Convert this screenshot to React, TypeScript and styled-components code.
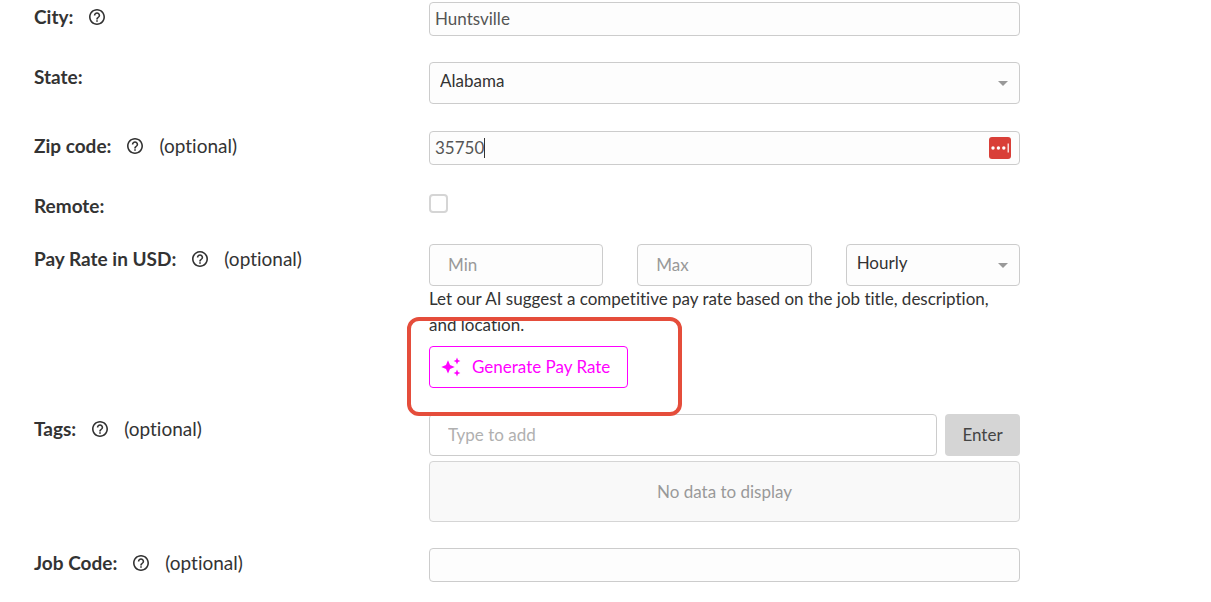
import React from "react";
import styled, { createGlobalStyle } from "styled-components";

const GlobalStyle = createGlobalStyle`
  *, *::before, *::after { box-sizing: border-box; }
  body {
    margin: 0;
    background: #fff;
    color: #333;
    font-family: Lato, "Liberation Sans", sans-serif;
    font-size: 17px;
    line-height: 26px;
    font-variant-ligatures: none;
  }
  button, input, select { font: inherit; color: inherit; margin: 0; }
`;

const Form = styled.form`
  display: flex;
  flex-direction: column;
  gap: 26px;
  max-width: 1020px;
  padding: 2px 0 20px 34px;
`;

const Row = styled.div<{ $height?: number }>`
  display: grid;
  grid-template-columns: 2fr 3fr;
  column-gap: 1px;
  align-items: start;
  height: ${(p) => (p.$height ? `${p.$height}px` : "auto")};
`;

const LabelCell = styled.div`
  display: flex;
  align-items: center;
  gap: 16px;
  font-size: 19px;
  line-height: 30px;
`;

const Label = styled.label`
  font-weight: 700;
`;

const HelpButton = styled.button`
  display: flex;
  padding: 0;
  border: 0;
  background: none;
`;

const Control = styled.div`
  position: relative;
  min-width: 0;
`;

const TextInput = styled.input<{ $tall?: boolean; $plain?: boolean }>`
  display: block;
  width: 100%;
  min-width: 0;
  height: ${(p) => (p.$tall ? 42 : 34)}px;
  padding: 0 ${(p) => (p.$tall ? 18 : 5)}px 2px;
  border: 1px solid #ccc;
  border-radius: 4px;
  background: ${(p) => (p.$plain ? "#fff" : "#fdfdfd")};
  color: #555;
  outline: 0;
  &::placeholder { color: ${(p) => (p.$plain ? "#b0b0b0" : "#999")}; opacity: 1; }
`;

const SelectWrap = styled.div`
  position: relative;
`;

const SelectBox = styled.select`
  display: block;
  appearance: none;
  width: 100%;
  height: 42px;
  padding: 0 32px 4px 10px;
  border: 1px solid #ccc;
  border-radius: 4px;
  background: #fdfdfd;
  color: #333;
`;

const Arrow = styled.svg`
  position: absolute;
  top: 19px;
  right: 12px;
  pointer-events: none;
`;

const TextCursor = styled.span`
  position: absolute;
  top: 7px;
  left: 55px;
  width: 1px;
  height: 20px;
  background: #333;
`;

const FillButton = styled.button`
  position: absolute;
  top: 6px;
  right: 9px;
  display: flex;
  padding: 0;
  border: 0;
  background: none;
`;

const CheckBox = styled.input`
  display: block;
  appearance: none;
  width: 19px;
  height: 19px;
  margin-top: 3px;
  border: 2px solid #d5d5d5;
  border-radius: 4px;
  background: #fff;
`;

const PayFields = styled.div`
  display: grid;
  grid-template-columns: repeat(3, 1fr);
  gap: 34px;
`;

const Hint = styled.p`
  margin: 0 0 8px;
`;

const Highlighted = styled.div`
  position: relative;
  width: fit-content;
`;

const Highlight = styled.div`
  position: absolute;
  z-index: 1;
  inset: -29px -54px -28px -22px;
  border: 4px solid #e54d3b;
  border-radius: 12px;
  pointer-events: none;
`;

const GenerateButton = styled.button`
  display: flex;
  align-items: center;
  gap: 11px;
  height: 42px;
  padding: 0 17px 0 11px;
  border: 1px solid #f0f;
  border-radius: 4px;
  background: #fff;
  color: #f0f;
`;

const TagEntry = styled.div`
  display: grid;
  grid-template-columns: 1fr 75px;
  gap: 8px;
  margin-bottom: 5px;
`;

const EnterButton = styled.button`
  height: 42px;
  padding: 0;
  border: 0;
  border-radius: 4px;
  background: #d5d5d5;
  color: #444;
`;

const TagList = styled.div`
  display: flex;
  align-items: center;
  justify-content: center;
  height: 61px;
  border: 1px solid #d5d5d5;
  border-radius: 4px;
  background: #f9f9f9;
  color: #999;
`;

function HelpIcon() {
  return (
    <svg width="16" height="16" viewBox="2 2 20 20" fill="#333" aria-hidden="true">
      <path d="M11 18h2v-2h-2v2zm1-16C6.48 2 2 6.48 2 12s4.48 10 10 10 10-4.48 10-10S17.52 2 12 2zm0 18c-4.41 0-8-3.59-8-8s3.59-8 8-8 8 3.59 8 8-3.59 8-8 8zm0-14c-2.21 0-4 1.79-4 4h2c0-1.1.9-2 2-2s2 .9 2 2c0 2-3 1.75-3 5h2c0-2.25 3-2.5 3-5 0-2.21-1.79-4-4-4z" />
    </svg>
  );
}

function SparkleIcon() {
  return (
    <svg width="20" height="20" viewBox="0 0 20 20" fill="currentColor" aria-hidden="true">
      <path d="M7 3.200 9 7.900 13.700 9.900 9 11.900 7 16.600 5 11.900 .3 9.900 5 7.900z" />
      <path d="M16 .5 17 3 19.400 4 17 5 16 7.500 15 5 12.600 4 15 3z" />
      <path d="M16 12.500 17 15 19.400 16 17 17 16 19.500 15 17 12.600 16 15 15z" />
    </svg>
  );
}

function FieldLabel({ id, text, help, optional }: { id: string; text: string; help?: boolean; optional?: boolean }) {
  return (
    <LabelCell>
      <Label htmlFor={id}>{text}</Label>
      {help && (
        <HelpButton type="button" aria-label="Help">
          <HelpIcon />
        </HelpButton>
      )}
      {optional && <span>(optional)</span>}
    </LabelCell>
  );
}

function Select({ id, label, options }: { id: string; label?: string; options: string[] }) {
  return (
    <SelectWrap>
      <SelectBox id={id} aria-label={label}>
        {options.map((o) => (
          <option key={o}>{o}</option>
        ))}
      </SelectBox>
      <Arrow width="10" height="5" viewBox="0 0 10 5" fill="#999" aria-hidden="true">
        <path d="M0 0h10L5 5z" />
      </Arrow>
    </SelectWrap>
  );
}

export default function App() {
  return (
    <>
      <GlobalStyle />
      <Form>
        <Row>
          <FieldLabel id="city" text="City:" help />
          <TextInput id="city" defaultValue="Huntsville" />
        </Row>
        <Row $height={43}>
          <FieldLabel id="state" text="State:" />
          <Select id="state" options={["Alabama"]} />
        </Row>
        <Row>
          <FieldLabel id="zip" text="Zip code:" help optional />
          <Control>
            <TextInput id="zip" defaultValue="35750" />
            <TextCursor />
            <FillButton type="button" aria-label="Fill from vault">
              <svg width="22" height="22" viewBox="0 0 22 22" aria-hidden="true">
                <rect width="22" height="22" rx="3" fill="#d93f38" />
                <g fill="#fff">
                  <circle cx="4" cy="11" r="1.7" />
                  <circle cx="9.4" cy="11" r="1.7" />
                  <circle cx="14.8" cy="11" r="1.7" />
                  <rect x="18.6" y="6.5" width="1.2" height="9" />
                </g>
              </svg>
            </FillButton>
          </Control>
        </Row>
        <Row $height={27}>
          <FieldLabel id="remote" text="Remote:" />
          <CheckBox id="remote" type="checkbox" />
        </Row>
        <Row>
          <FieldLabel id="pay-min" text="Pay Rate in USD:" help optional />
          <Control>
            <PayFields>
              <TextInput $tall id="pay-min" placeholder="Min" />
              <TextInput $tall aria-label="Maximum pay" placeholder="Max" />
              <Select id="pay-period" label="Pay period" options={["Hourly"]} />
            </PayFields>
            <Hint>Let our AI suggest a competitive pay rate based on the job title, description, and location.</Hint>
            <Highlighted>
              <GenerateButton type="button">
                <SparkleIcon />
                Generate Pay Rate
              </GenerateButton>
              <Highlight />
            </Highlighted>
          </Control>
        </Row>
        <Row>
          <FieldLabel id="tags" text="Tags:" help optional />
          <Control>
            <TagEntry>
              <TextInput $tall $plain id="tags" placeholder="Type to add" />
              <EnterButton type="button">Enter</EnterButton>
            </TagEntry>
            <TagList>No data to display</TagList>
          </Control>
        </Row>
        <Row>
          <FieldLabel id="job-code" text="Job Code:" help optional />
          <TextInput id="job-code" />
        </Row>
      </Form>
    </>
  );
}
